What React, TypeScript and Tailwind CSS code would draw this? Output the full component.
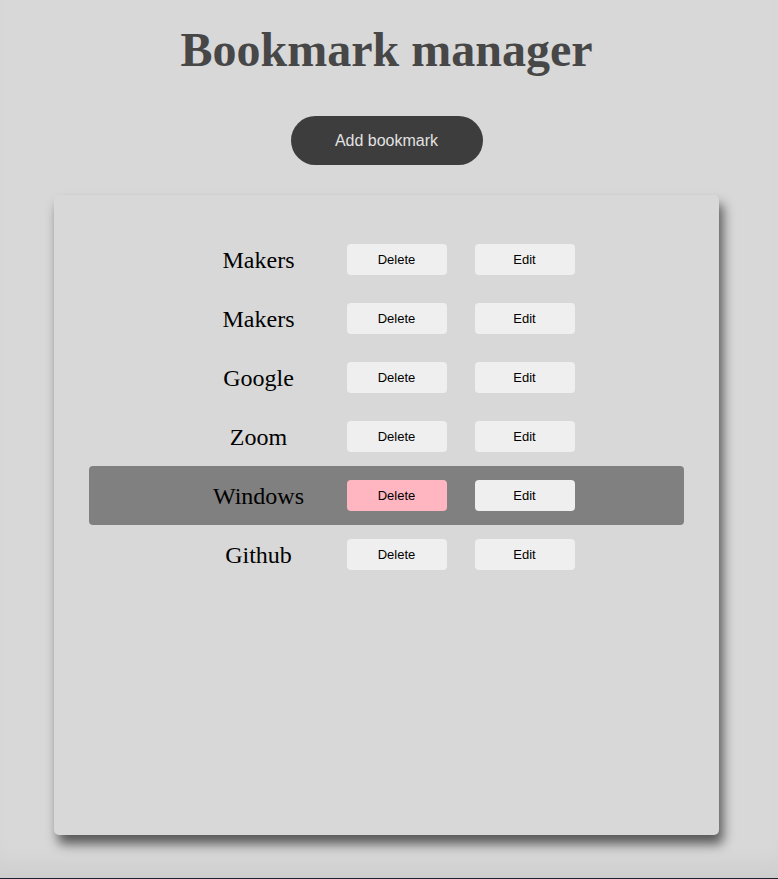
const bookmarks = [
  { id: 1, name: 'Makers' },
  { id: 2, name: 'Makers' },
  { id: 3, name: 'Google' },
  { id: 4, name: 'Zoom' },
  { id: 5, name: 'Windows', hovered: true },
  { id: 6, name: 'Github' },
];

const App = () => {
  return (
    <div className="flex h-screen flex-col items-center overflow-hidden border-b border-[#1c2230] bg-[#d8d8d8] pr-[5px] shadow-[inset_0_-24px_24px_-12px_rgba(0,0,0,0.05)]">
      <h1 className="mt-[23px] font-['Liberation_Serif','Times_New_Roman',serif] text-[48px] font-bold leading-[53px] text-[#474747]">
        Bookmark manager
      </h1>

      <button
        className="mt-[40px] h-[49px] w-[192px] rounded-full bg-[#3d3d3d] font-['Liberation_Sans',Arial,sans-serif] text-[16px] text-[#e2e2e2]"
        type="button"
      >
        Add bookmark
      </button>

      <div className="mt-[30px] flex h-[640px] w-[665px] flex-col items-center rounded-[5px] bg-[#d8d8d8] pt-[35px] shadow-[4px_9px_12px_rgba(0,0,0,0.6)]">
        {bookmarks.map(item => (
          <div
            key={item.id}
            className={`flex h-[59px] w-[595px] items-center justify-center rounded-[4px] ${
              item.hovered ? 'bg-[#808080]' : ''
            }`}
          >
            <span className="w-[120px] text-center font-['Liberation_Serif','Times_New_Roman',serif] text-[24px] text-black">
              {item.name}
            </span>
            <button
              className={`ml-[28px] h-[31px] w-[100px] rounded-[4px] font-['Liberation_Sans',Arial,sans-serif] text-[13px] text-black ${
                item.hovered ? 'bg-[#ffb6c1]' : 'bg-[#efefef]'
              }`}
              type="button"
            >
              Delete
            </button>
            <button
              className="ml-[28px] h-[31px] w-[100px] rounded-[4px] bg-[#efefef] font-['Liberation_Sans',Arial,sans-serif] text-[13px] text-black"
              type="button"
            >
              Edit
            </button>
          </div>
        ))}
      </div>
    </div>
  );
};

export default App;
